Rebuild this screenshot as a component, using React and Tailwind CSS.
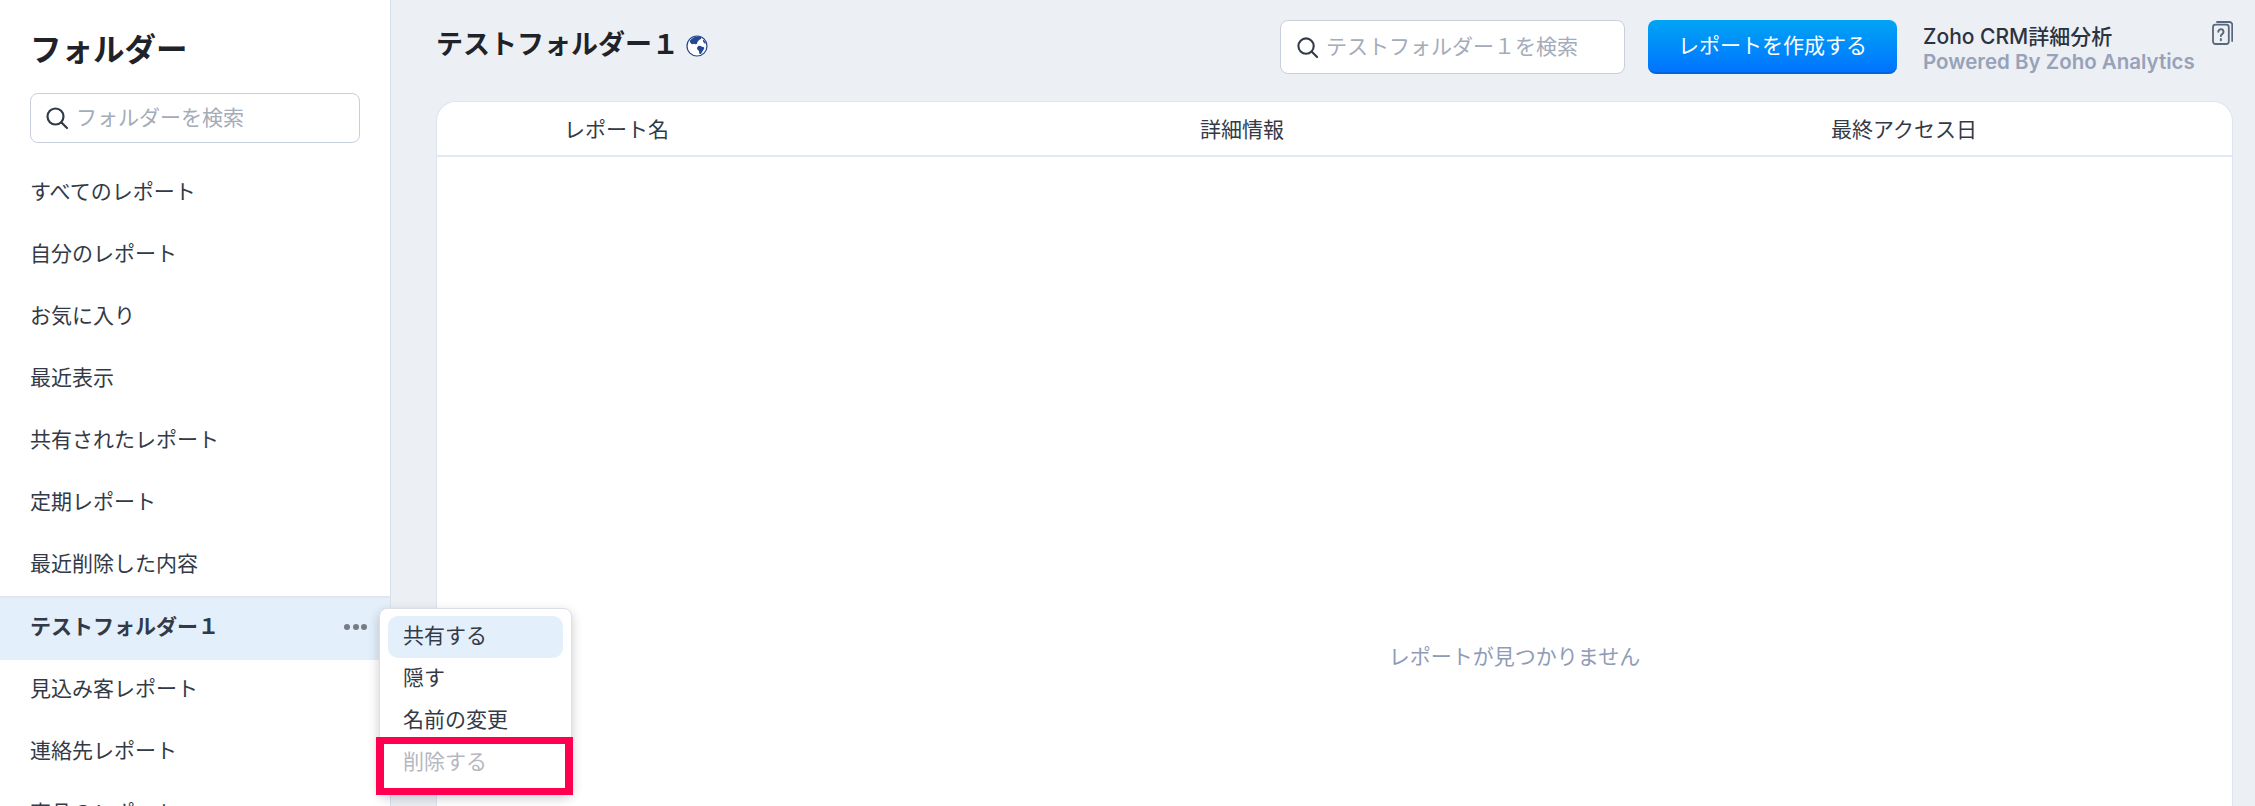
const F = "font-['Inter','Noto_Sans_CJK_JP',sans-serif]";

function SearchIcon({ className }) {
  return (
    <svg viewBox="0 0 24 24" className={className} fill="none" stroke="#333a47" strokeWidth="2.2" strokeLinecap="round">
      <circle cx="10.5" cy="10.5" r="8" />
      <path d="M16.5 16.5L22 22" />
    </svg>
  );
}

function Globe() {
  return (
    <svg viewBox="0 0 22 22" className="w-[22px] h-[22px] ml-[7px] mt-[2px]">
      <circle cx="11" cy="11" r="10" fill="#fff" stroke="#24478f" strokeWidth="1.2" />
      <path d="M4 5.500C6 2.800 9 1.200 13 1.400c1.600.2 2.600 1 2.200 2-.6 1.200-2 1-2.600 2.200-.5 1.200-1.400 1-1.400 2.400 0 1.200-1.200 1.400-2.400 1-1.200-.5-1.600.6-3 .1C5 8.600 3.400 7 4 5.500z" fill="#24478f" />
      <path d="M11.600 11.200c1.400-.8 3-.4 4 .3 1 .6 2.200.3 2.600 1.300.3 1.200-1 2.400-1.800 3.600-.7 1.200-1.400 3-2.600 2.600-.9-.5-.5-2.200-1-3.200-.5-1-1.800-1.200-1.800-2.600 0-.9.6-1.500 1.600-2z" fill="#24478f" />
      <path d="M17 4.500c1.200.4 2.800 2.800 2.800 4.400-1-.2-2-.7-2.400-1.800-.3-.8-.8-1.800-.4-2.600z" fill="#24478f" />
    </svg>
  );
}

function HelpDoc() {
  return (
    <svg viewBox="0 0 21 24" className="w-[21px] h-[24px]" fill="none" stroke="#5b677d" strokeWidth="1.8">
      <path d="M5 1h12.500a2.700 2.700 0 0 1 2.700 2.700V20" strokeLinecap="round" />
      <rect x="1" y="3.700" width="15.800" height="19.300" rx="2.500" />
      <path d="M6.300 10.700a2.600 2.600 0 1 1 4.100 2.200c-1 .7-1.500 1-1.500 2.200" strokeLinecap="round" strokeWidth="2" />
      <path d="M8.900 18v1.200" strokeLinecap="round" strokeWidth="2" />
    </svg>
  );
}

const rows = [
  "すべてのレポート",
  "自分のレポート",
  "お気に入り",
  "最近表示",
  "共有されたレポート",
  "定期レポート",
  "最近削除した内容",
];
const rowsAfter = ["見込み客レポート", "連絡先レポート", "商品のレポート"];

export default function App() {
  return (
    <div className={`relative w-[2255px] h-[806px] overflow-hidden flex bg-[#eceff4] ${F}`}>
      <aside className="w-[391px] shrink-0 h-full bg-white border-r border-[#d9e0ea] flex flex-col overflow-hidden">
        <h2 className="shrink-0 pl-[30px] pt-[26px] h-[93px] text-[31.5px] leading-[48px] font-bold text-[#1f2329]">フォルダー</h2>
        <div className="mx-[30px] w-[330px] h-[50px] shrink-0 rounded-[8px] border border-[#c8cedb] flex items-center pl-[14px]">
          <SearchIcon className="w-[24px] h-[24px]" />
          <span className="ml-[7px] text-[21px] text-[#a4abb9]">フォルダーを検索</span>
        </div>
        <div className="mt-[17px] shrink-0 flex flex-col">
          {rows.map((r) => (
            <div key={r} className="h-[62px] shrink-0 flex items-center pl-[30px] pt-[1px] text-[21px] text-[#333a47]">{r}</div>
          ))}
          <div className="mt-[2px] h-[64px] shrink-0 flex items-center justify-between pl-[30px] pr-[23px] pb-[4px] bg-[#e3effb] border-t-2 border-[#e2e7ee] text-[21px] font-bold text-[#333a47]">
            <span>テストフォルダー１</span>
            <span className="flex gap-[2.500px]">
              <i className="block w-[6px] h-[6px] rounded-full bg-[#777b84]" />
              <i className="block w-[6px] h-[6px] rounded-full bg-[#777b84]" />
              <i className="block w-[6px] h-[6px] rounded-full bg-[#777b84]" />
            </span>
          </div>
          {rowsAfter.map((r) => (
            <div key={r} className="h-[62px] shrink-0 flex items-center pl-[30px] pb-[4px] text-[21px] text-[#333a47]">{r}</div>
          ))}
        </div>
      </aside>

      <main className="flex-1 min-w-0 h-full flex flex-col pl-[45px] pr-[22px]">
        <header className="h-[101px] shrink-0 flex items-start">
          <div className="flex items-center mt-[21px] h-[48px]">
            <h1 className="text-[27px] font-bold text-[#1f2329]">テストフォルダー１</h1>
            <Globe />
          </div>
          <div className="ml-auto mt-[20px] flex items-start">
            <div className="w-[345px] h-[54px] rounded-[8px] border border-[#c8cedb] bg-white flex items-center pl-[15px]">
              <SearchIcon className="w-[23px] h-[23px]" />
              <span className="ml-[7px] text-[21px] text-[#a4abb9]">テストフォルダー１を検索</span>
            </div>
            <button className="ml-[23px] w-[249px] h-[54px] rounded-[8px] text-white text-[21px] bg-gradient-to-b from-[#00a4f4] to-[#0072ff] border-b-2 border-[#0064dc]">レポートを作成する</button>
            <div className="ml-[26px] w-[310px] flex flex-col">
              <span className="text-[21px] leading-[24px] font-medium text-[#2b3240] mt-[5px]">Zoho CRM詳細分析</span>
              <span className="text-[20.5px] leading-[24px] mt-[1px] font-semibold text-[#97a2b9]">Powered By Zoho Analytics</span>
            </div>
          </div>
          <div className="w-0 relative">
            <div className="absolute right-0 top-[21px]"><HelpDoc /></div>
          </div>
        </header>
        <section className="flex-1 min-h-0 bg-white rounded-t-[20px] border border-b-0 border-[#dde5f0] flex flex-col">
          <div className="h-[55px] shrink-0 flex items-center pl-[127px] pt-[2px] border-b-2 border-[#e2e9f3] text-[21px] text-[#333a47]">
            <span className="w-[636px]">レポート名</span>
            <span className="w-[631px]">詳細情報</span>
            <span>最終アクセス日</span>
          </div>
          <div className="flex-1 flex items-center justify-center pl-[360px] pt-[350px]">
            <span className="text-[21px] text-[#8f9cb8]">レポートが見つかりません</span>
          </div>
        </section>
      </main>

      <div className="absolute left-[379px] top-[608px] w-[193px] h-[186px] bg-white rounded-[8px] border border-[#dcdfe5] shadow-[0_4px_12px_rgba(0,0,0,0.2)] pt-[7px] px-[8px] flex flex-col text-[21px] text-[#333a47]">
        <div className="h-[42px] shrink-0 rounded-[10px] bg-[#e3effb] flex items-center pl-[15px] pb-[3px]">共有する</div>
        <div className="h-[42px] shrink-0 flex items-center pl-[15px] pb-[3px]">隠す</div>
        <div className="h-[42px] shrink-0 flex items-center pl-[15px] pb-[3px]">名前の変更</div>
        <div className="h-[42px] shrink-0 flex items-center pl-[15px] pb-[3px] text-[#b4b8c1]">削除する</div>
      </div>
      <div className="absolute left-[376px] top-[737px] w-[197px] h-[58px] border-y-[7px] border-x-[8px] border-[#ff0050]" />
    </div>
  );
}
